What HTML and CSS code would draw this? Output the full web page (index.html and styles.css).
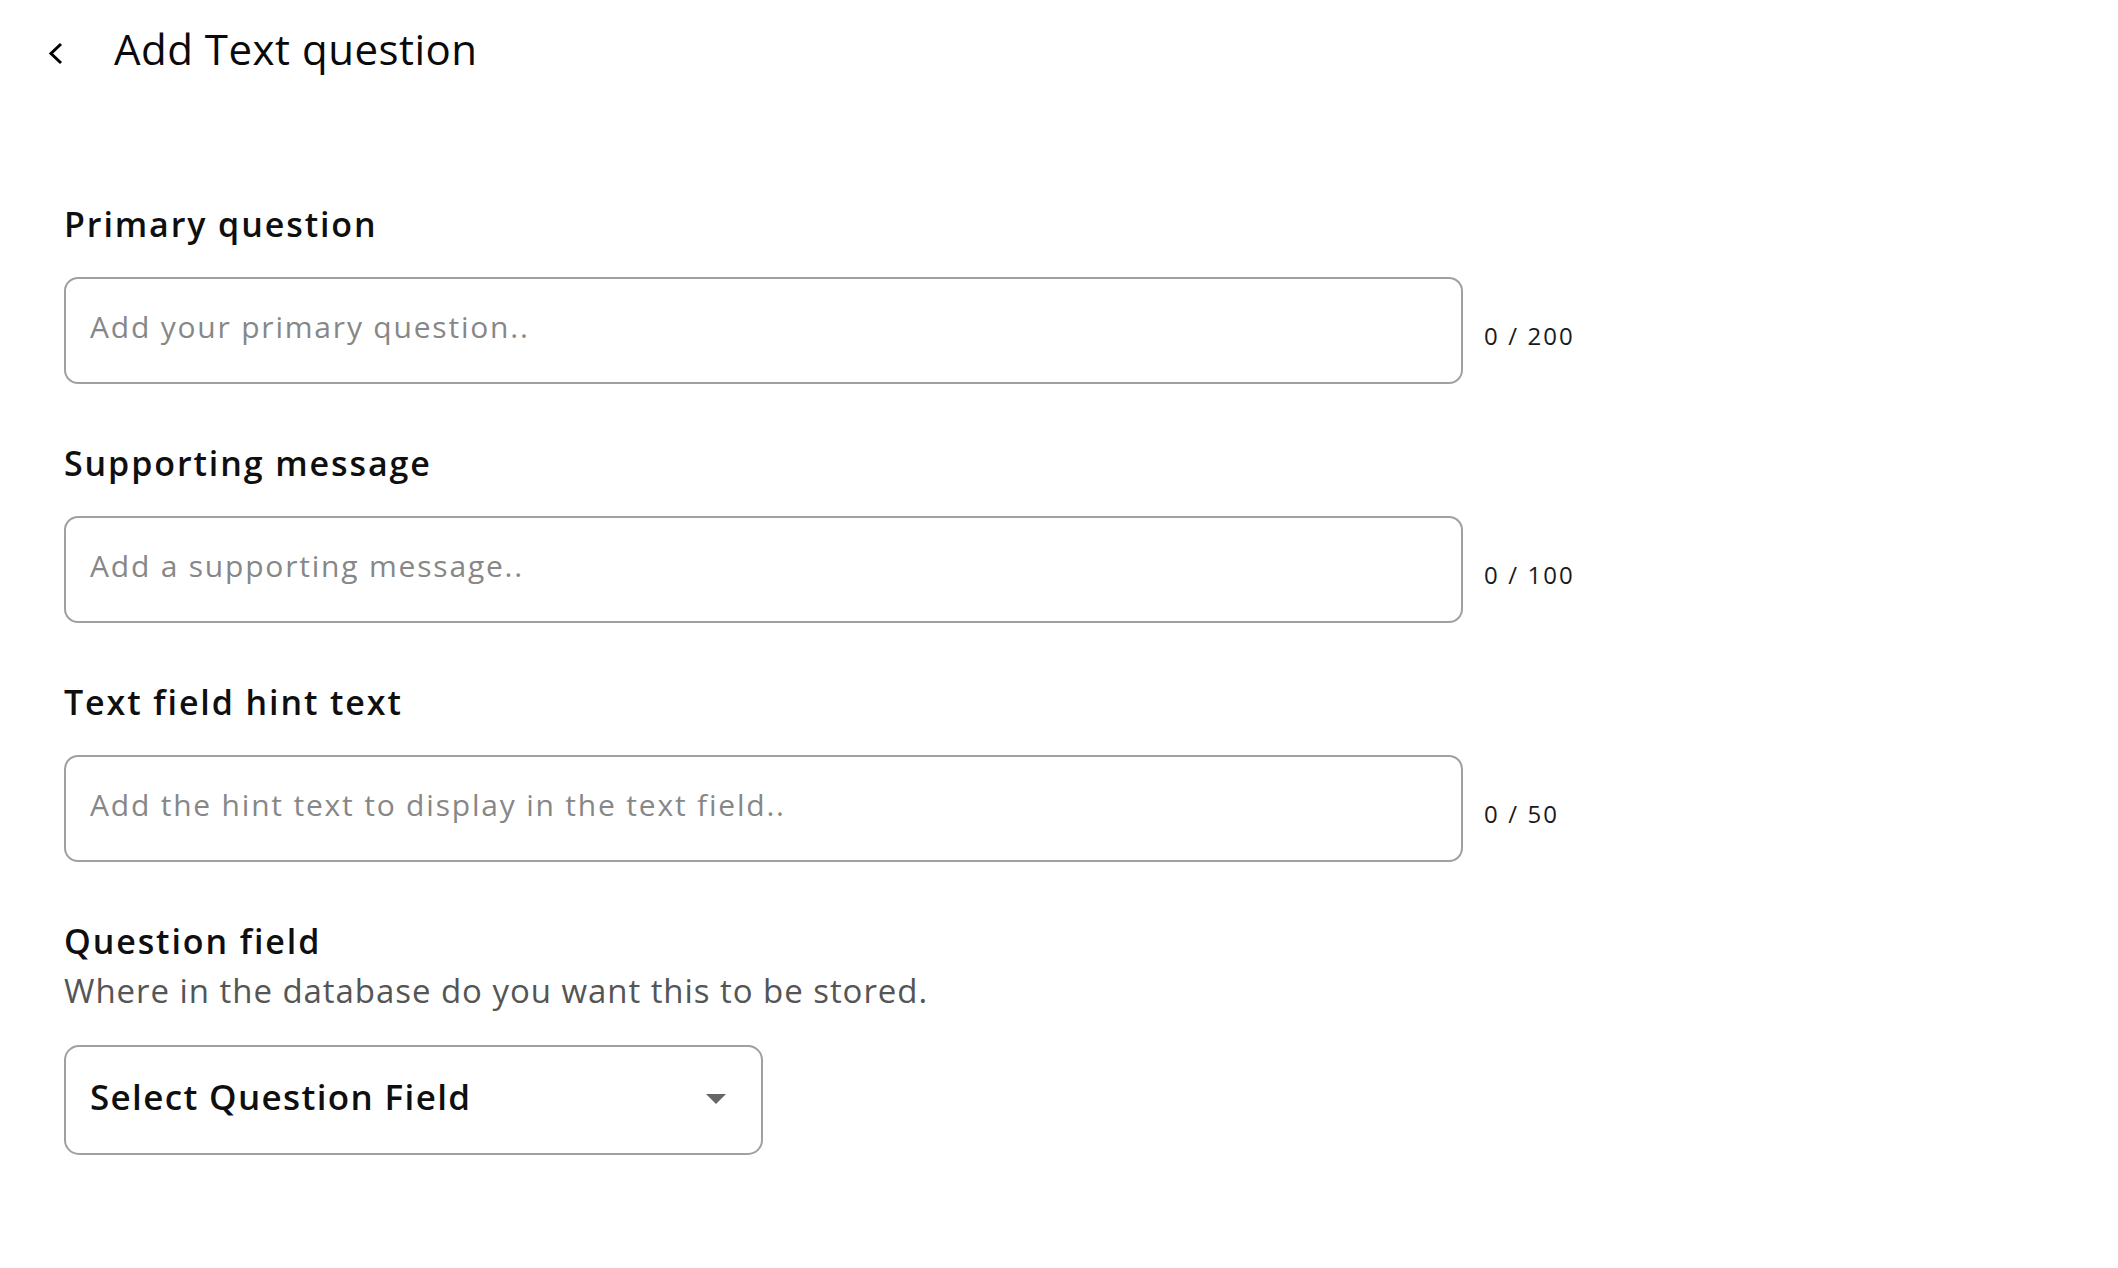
FILE: index.html
```html
<!DOCTYPE html>
<html lang="en">
<head>
<meta charset="utf-8">
<title>Add Text question</title>
<link rel="stylesheet" href="styles.css">
</head>
<body>
<header class="topbar">
  <button class="back" type="button" aria-label="Back">
    <svg class="back-icon" width="18" height="26" viewBox="0 0 18 26"><path d="M15 3 L5 12.5 L15 22" fill="none" stroke="#000" stroke-width="3"/></svg>
  </button>
  <h1 class="title">Add Text question</h1>
</header>
<main class="form">
  <section class="field">
    <label class="field-label" for="q1">Primary question</label>
    <div class="field-row">
      <input class="text-input" id="q1" type="text" placeholder="Add your primary question..">
      <span class="counter">0 / 200</span>
    </div>
  </section>
  <section class="field">
    <label class="field-label" for="q2">Supporting message</label>
    <div class="field-row">
      <input class="text-input" id="q2" type="text" placeholder="Add a supporting message..">
      <span class="counter">0 / 100</span>
    </div>
  </section>
  <section class="field">
    <label class="field-label" for="q3">Text field hint text</label>
    <div class="field-row">
      <input class="text-input" id="q3" type="text" placeholder="Add the hint text to display in the text field..">
      <span class="counter">0 / 50</span>
    </div>
  </section>
  <section class="field">
    <span class="field-label field-label-tight">Question field</span>
    <p class="field-desc">Where in the database do you want this to be stored.</p>
    <div class="select" role="button">
      <span class="select-value">Select Question Field</span>
      <svg class="caret" width="20" height="10" viewBox="0 0 20 10"><path d="M0 0 H20 L10 10 Z"/></svg>
    </div>
  </section>
</main>
</body>
</html>
```
FILE: styles.css
```css
html, body {
  margin: 0;
  background: #ffffff;
}
body {
  font-family: "Open Sans", "Noto Sans", sans-serif;
  color: #111111;
}
.topbar {
  display: flex;
  align-items: flex-start;
  padding: 19px 0 0 46px;
}
.back {
  display: block;
  border: 0;
  background: none;
  padding: 0;
  margin-top: 22px;
  width: 18px;
  height: 26px;
  cursor: pointer;
}
.back-icon {
  display: block;
}
.title {
  margin: 0 0 0 50px;
  font-size: 42px;
  font-weight: 400;
  line-height: 60px;
  letter-spacing: 0.5px;
  color: #0a0a0a;
}
.form {
  display: flex;
  flex-direction: column;
  gap: 56px;
  padding: 122px 0 0 64px;
}
.field {
  display: flex;
  flex-direction: column;
  align-items: flex-start;
}
.field-label {
  font-size: 34px;
  font-weight: 600;
  line-height: 46px;
  letter-spacing: 1.9px;
  margin-bottom: 30px;
  color: #0f0f0f;
}
.field-label-tight {
  margin-bottom: 5px;
}
.field-row {
  display: flex;
  align-items: flex-start;
  gap: 21px;
}
.text-input {
  width: 1399px;
  height: 107px;
  box-sizing: border-box;
  border: 2px solid #a0a0a0;
  border-radius: 14px;
  padding: 0 24px 8px;
  margin: 0;
  font-family: "Open Sans", "Noto Sans", sans-serif;
  font-size: 30px;
  font-weight: 400;
  letter-spacing: 1.8px;
  color: #111111;
  background: #ffffff;
  outline: none;
}
.text-input::placeholder {
  color: #878787;
  opacity: 1;
}
.counter {
  margin-top: 42px;
  font-size: 24px;
  line-height: 34px;
  letter-spacing: 2.1px;
  color: #1a1a1a;
  white-space: nowrap;
}
.field-desc {
  margin: 0 0 32px;
  font-size: 33px;
  line-height: 44px;
  letter-spacing: 0.95px;
  color: #555555;
}
.select {
  width: 699px;
  height: 110px;
  box-sizing: border-box;
  border: 2px solid #a0a0a0;
  border-radius: 15px;
  display: flex;
  align-items: center;
  justify-content: space-between;
  padding: 0 35px 7px 24px;
  cursor: pointer;
}
.select-value {
  font-size: 35px;
  font-weight: 600;
  line-height: 48px;
  letter-spacing: 1.35px;
  color: #0f0f0f;
}
.caret {
  display: block;
  fill: #666666;
  margin-top: 4px;
}
```
